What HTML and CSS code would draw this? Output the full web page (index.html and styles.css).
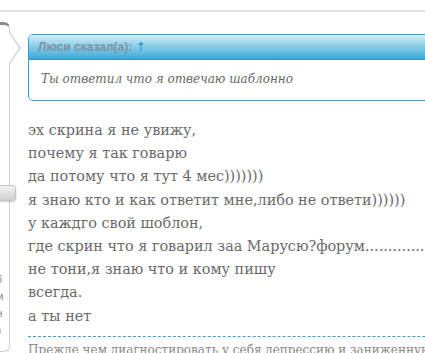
FILE: index.html
```html
<!DOCTYPE html>
<html lang="ru">
<head>
    <meta charset="UTF-8">
    <title>Сообщение</title>
    <link rel="stylesheet" href="styles.css">
</head>
<body>
    <div class="post">
        <div class="userinfo">
            <span class="arrow"></span>
            <div class="button"></div>
            <div class="stats">
                <span class="blue">:</span>
                <span class="blue">:</span>
                <span>б</span>
                <span>м</span>
                <span>н</span>
                <span>з</span>
            </div>
        </div>
        <div class="message">
            <div class="quote">
                <div class="quote-head">Люси сказал(а): <a href="#">↑</a></div>
                <div class="quote-body">Ты ответил что я отвечаю шаблонно</div>
            </div>
            <div class="text">
                эх скрина я не увижу,<br>
                почему я так говарю<br>
                да потому что я тут 4 мес)))))))<br>
                я знаю кто и как ответит мне,либо не ответи))))))<br>
                у каждго свой шоблон,<br>
                где скрин что я говарил заа Марусю?форум.........................<br>
                не тони,я знаю что и кому пишу<br>
                всегда.<br>
                а ты нет
            </div>
            <div class="signature">Прежде чем диагностировать у себя депрессию и заниженную самооценку</div>
        </div>
    </div>
</body>
</html>
```
FILE: styles.css
```css
body {
    margin: 0;
    background-color: #fff;
    overflow: hidden;
    font-family: "DejaVu Serif", serif;
}
.post {
    margin-top: 10px;
    border-top: 2px solid #e2e2e2;
    padding-top: 10px;
    display: flex;
    width: 700px;
}
.userinfo {
    position: relative;
    width: 9px;
    height: 326px;
    border: 1px solid #d0d0d0;
    border-left: none;
    border-top: 3px solid #8a8a8a;
    border-radius: 0 6px 6px 0;
    flex-shrink: 0;
}
.userinfo .arrow {
    position: absolute;
    top: 7px;
    right: -12px;
    width: 0;
    height: 0;
    border-top: 16px solid transparent;
    border-bottom: 16px solid transparent;
    border-left: 11px solid #d6d6d6;
}
.userinfo .arrow::after {
    content: "";
    position: absolute;
    top: -15px;
    left: -12px;
    border-top: 15px solid transparent;
    border-bottom: 15px solid transparent;
    border-left: 10px solid #fff;
}
.userinfo .button {
    margin-top: 160px;
    margin-left: -2px;
    width: 16px;
    height: 14px;
    border: 1px solid #c4c4c4;
    border-radius: 3px;
    background: linear-gradient(#f2f2f2, #cfcfcf);
    box-shadow: 0 1px 2px rgba(0,0,0,0.2);
}
.userinfo .stats {
    margin-top: 36px;
    font-family: "DejaVu Sans", sans-serif;
    font-size: 10px;
    color: #888;
    line-height: 17px;
    overflow: hidden;
}
.userinfo .stats span {
    display: block;
    margin-left: -4px;
}
.userinfo .stats .blue {
    color: #6cc4ea;
}
.message {
    flex: 1;
    padding-left: 18px;
    padding-top: 12px;
}
.quote {
    border: 1px solid #2fa3d2;
    border-radius: 5px;
}
.quote-head {
    height: 24px;
    line-height: 24px;
    padding-left: 9px;
    background: linear-gradient(#d3edf7, #3ba9d5);
    border-bottom: 1px solid #2a9ccb;
    border-radius: 4px 4px 0 0;
    font-family: "Liberation Sans", sans-serif;
    font-size: 12px;
    font-weight: bold;
    color: #7f90a0;
}
.quote-head a {
    font-family: "DejaVu Sans", sans-serif;
    font-weight: normal;
    color: #1a8fd0;
    font-size: 12px;
    text-decoration: none;
}
.quote-body {
    padding: 11px 12px 12px;
    font-style: italic;
    font-size: 12px;
    line-height: 17px;
    color: #666;
}
.text {
    margin-top: 18px;
    font-size: 14.4px;
    line-height: 23.2px;
    color: #6a6a6a;
    white-space: nowrap;
}
.signature {
    margin-top: 8px;
    padding-top: 6px;
    border-top: 1px dashed #2aa5d6;
    font-size: 12px;
    color: #888;
    white-space: nowrap;
}
```
